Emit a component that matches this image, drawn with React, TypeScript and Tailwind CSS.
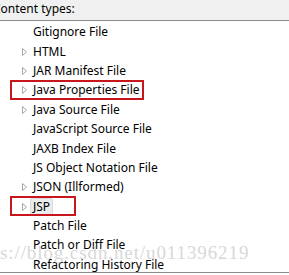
const rows = [
  { label: "Gitignore File", arrow: false },
  { label: "HTML", arrow: true },
  { label: "JAR Manifest File", arrow: true },
  { label: "Java Properties File", arrow: true, box: true },
  { label: "Java Source File", arrow: true },
  { label: "JavaScript Source File", arrow: false },
  { label: "JAXB Index File", arrow: false },
  { label: "JS Object Notation File", arrow: false },
  { label: "JSON (Illformed)", arrow: true },
  { label: "JSP", arrow: true, box: true, selected: true },
  { label: "Patch File", arrow: false },
  { label: "Patch or Diff File", arrow: false },
  { label: "Refactoring History File", arrow: false },
];

function Arrow() {
  return (
    <svg width="6" height="8" viewBox="0 0 6 8" className="shrink-0">
      <path d="M0.5 0.5 L4.5 4 L0.5 7.5 Z" fill="none" stroke="#a6a6a6" strokeWidth="1" />
    </svg>
  );
}

export default function App() {
  return (
    <div
      className="relative w-[289px] h-[275px] bg-white overflow-hidden text-[12px] text-black"
      style={{ fontFamily: '"Noto Sans", "Liberation Sans", sans-serif' }}
    >
      {/* Header label */}
      <div className="h-[21px] bg-[#f0f0f0] border-b border-[#8c8c8c] leading-[18px] ml-[-7px]">
        Content types:
      </div>

      {/* Tree list */}
      <div className="h-[252px] border-b border-[#8c8c8c] pt-[1.5px]">
        {rows.map((r) => (
          <div key={r.label} className="relative h-[19.4px] flex items-center">
            <div className="w-[22px]" />
            <div className="w-[11px] flex items-center">{r.arrow && <Arrow />}</div>
            {r.selected ? (
              <span className="ml-[-3px] px-[2px] h-[18px] leading-[16px] bg-[#ececec] border border-[#dadada] rounded-[2px]">
                {r.label}
              </span>
            ) : (
              <span className="leading-[18px] whitespace-nowrap">{r.label}</span>
            )}
            {r.box && (
              <div
                className={`absolute left-[10px] top-[-1px] h-[20px] border-2 border-[#c8161d] ${
                  r.selected ? "w-[66px]" : "w-[134px]"
                }`}
              />
            )}
          </div>
        ))}
      </div>

      {/* Watermark */}
      <div
        className="absolute left-0 top-[241px] text-[19px] leading-[24px] text-[#cfcfcf] opacity-80 whitespace-nowrap pointer-events-none tracking-[0.9px]"
        style={{ fontFamily: '"Liberation Serif", serif' }}
      >
        s://blog.csdn.net/u011396219
      </div>
    </div>
  );
}
